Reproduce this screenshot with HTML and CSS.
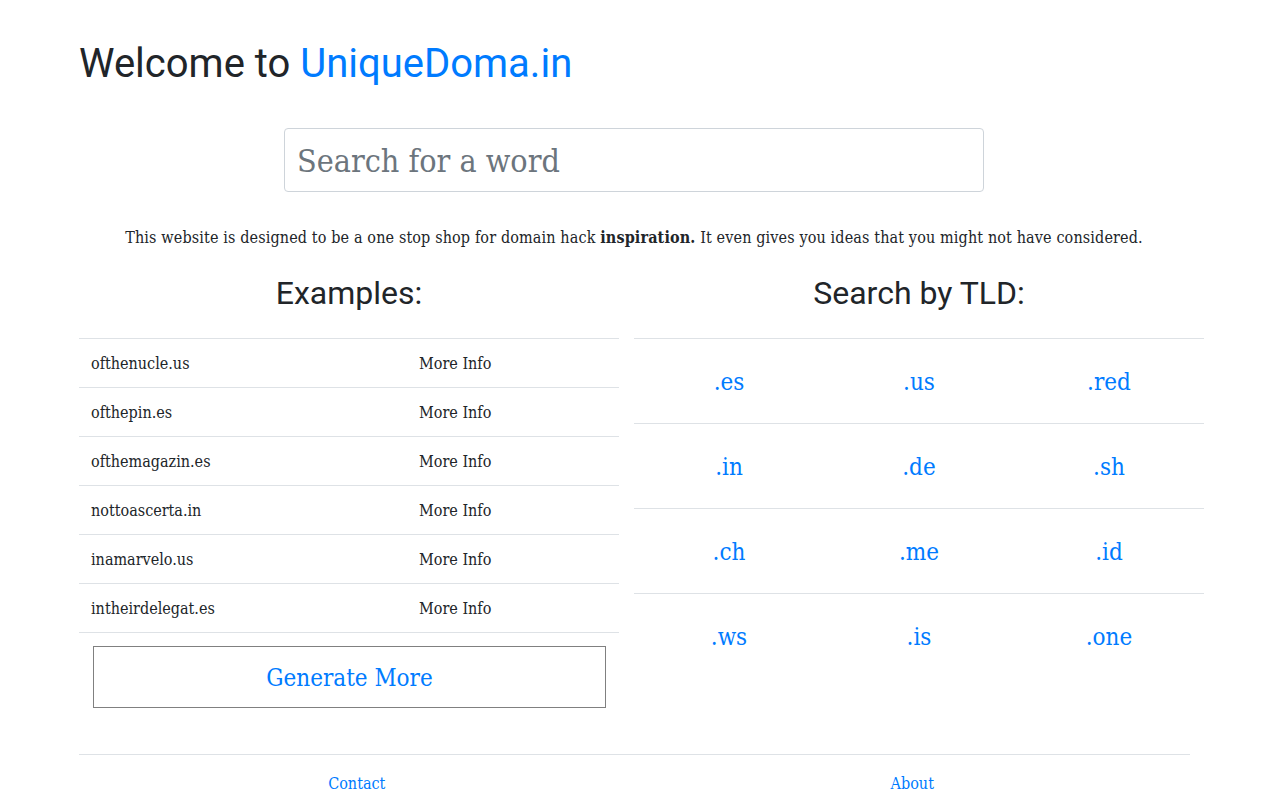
FILE: index.html
```html
<!DOCTYPE html>
<html lang="en">
<head>
<meta charset="utf-8">
<title>UniqueDoma.in</title>
<link rel="stylesheet" href="styles.css">
</head>
<body>
<div class="container">
  <h1 class="title">Welcome to <a href="#" class="brand">UniqueDoma.in</a></h1>
  <div class="search-wrap">
    <input class="search" type="text" placeholder="Search for a word">
  </div>
  <p class="intro">This website is designed to be a one stop shop for domain hack <strong>inspiration.</strong> It even gives you ideas that you might not have considered.</p>
  <div class="row">
    <div class="col col-left">
      <h2 class="col-title">Examples:</h2>
      <table class="examples">
        <tr><td class="name">ofthenucle.us</td><td>More Info</td></tr>
        <tr><td class="name">ofthepin.es</td><td>More Info</td></tr>
        <tr><td class="name">ofthemagazin.es</td><td>More Info</td></tr>
        <tr><td class="name">nottoascerta.in</td><td>More Info</td></tr>
        <tr><td class="name">inamarvelo.us</td><td>More Info</td></tr>
        <tr><td class="name">intheirdelegat.es</td><td>More Info</td></tr>
      </table>
      <button class="generate">Generate More</button>
    </div>
    <div class="col col-right">
      <h2 class="col-title">Search by TLD:</h2>
      <table class="tlds">
        <tr><td><a href="#">.es</a></td><td><a href="#">.us</a></td><td><a href="#">.red</a></td></tr>
        <tr><td><a href="#">.in</a></td><td><a href="#">.de</a></td><td><a href="#">.sh</a></td></tr>
        <tr><td><a href="#">.ch</a></td><td><a href="#">.me</a></td><td><a href="#">.id</a></td></tr>
        <tr><td><a href="#">.ws</a></td><td><a href="#">.is</a></td><td><a href="#">.one</a></td></tr>
      </table>
    </div>
  </div>
  <footer class="footer">
    <a href="#">Contact</a>
    <a href="#">About</a>
  </footer>
</div>
</body>
</html>
```

FILE: styles.css
```css
* { box-sizing: border-box; }
html, body { margin: 0; padding: 0; background: #fff; }
body {
  font-family: "Roboto Slab", "DejaVu Serif Condensed", "DejaVu Serif", serif;
  font-size: 16px;
  line-height: 24px;
  color: #212529;
}
a { color: #007bff; text-decoration: none; }
.container {
  width: 1140px;
  margin: 0 auto;
  padding: 40px 15px 0;
}
.title {
  font-family: Roboto, "Liberation Sans", sans-serif;
  font-weight: 400;
  font-size: 40px;
  line-height: 48px;
  margin: 0;
}
.search-wrap {
  display: flex;
  justify-content: center;
  margin-top: 40px;
}
.search {
  width: 700px;
  height: 64px;
  border: 1px solid #ced4da;
  border-radius: 4px;
  padding: 2px 12px 0;
  font-family: inherit;
  font-size: 32px;
  color: #495057;
  outline: none;
}
.search::placeholder { color: #6c757d; }
.intro {
  text-align: center;
  margin: 34px 0 0;
  letter-spacing: 0.13px;
}
.intro strong { font-weight: 700; }
.row {
  display: flex;
  margin: 24px -15px 0;
}
.col { flex: 0 0 570px; }
.col-left { padding: 0 15px; }
.col-title {
  font-family: Roboto, "Liberation Sans", sans-serif;
  font-weight: 400;
  font-size: 32px;
  line-height: 38px;
  text-align: center;
  margin: 0 0 26px;
}
table { border-collapse: collapse; width: 100%; }
.examples td {
  border-top: 1px solid #dee2e6;
  padding: 13px 12px 11px;
  vertical-align: top;
}
.examples tr:last-child td { border-bottom: 1px solid #dee2e6; }
.examples td.name { width: 328px; }
.generate {
  display: block;
  width: 513px;
  height: 62px;
  margin: 13px 0 0 14px;
  background: #fff;
  border: 1px solid #808080;
  font-family: inherit;
  font-size: 24px;
  color: #007bff;
  padding: 2px 0 0;
}
.tlds td {
  border-top: 1px solid #dee2e6;
  height: 85px;
  width: 33.333%;
  text-align: center;
  vertical-align: middle;
  font-size: 24px;
  padding: 2px 0 0;
}
.footer {
  display: flex;
  margin-top: 46px;
  border-top: 1px solid #dee2e6;
  padding-top: 17px;
  width: 1111px;
}
.footer a { flex: 1; text-align: center; }
```
